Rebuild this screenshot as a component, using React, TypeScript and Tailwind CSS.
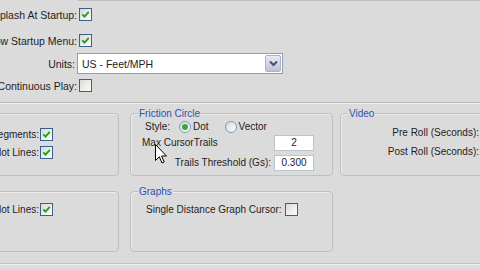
import React from "react";

const Check = ({ checked }: { checked?: boolean }) => (
  <span className="flex h-[13px] w-[13px] shrink-0 items-center justify-center border border-[#3a6189] bg-gradient-to-br from-[#d9d9d3] to-white">
    {checked && (
      <svg width="9" height="9" viewBox="0 0 9 9">
        <path d="M1.3 4.3 L3.5 6.6 L7.8 1.8" stroke="#21a121" strokeWidth="1.9" fill="none" />
      </svg>
    )}
  </span>
);

const Radio = ({ checked }: { checked?: boolean }) => (
  <span className="flex h-[12px] w-[12px] shrink-0 items-center justify-center rounded-full border border-[#7f9ab6] bg-gradient-to-br from-[#d3d9e1] to-white">
    {checked && <span className="h-[6px] w-[6px] rounded-full bg-[#3aa83a]" />}
  </span>
);

const Input = ({ value }: { value: string }) => (
  <div className="flex h-[16px] w-[40px] shrink-0 items-center justify-center border border-[#bcc5ce] bg-white">
    {value}
  </div>
);

const TopRow = ({ label, children }: { label: string; children: React.ReactNode }) => (
  <div className="flex items-center">
    <div className="flex w-[77px] shrink-0 justify-end overflow-hidden whitespace-nowrap text-[10.5px]">
      <span className="shrink-0">{label}</span>
    </div>
    <div className="ml-[2px]">{children}</div>
  </div>
);

const Group = ({
  title,
  className,
  children,
}: {
  title?: string;
  className: string;
  children?: React.ReactNode;
}) => (
  <div
    className={
      "relative shrink-0 rounded-[4px] border border-[#bfbfbf] shadow-[inset_1px_1px_0_#ececec] " +
      className
    }
  >
    {title && (
      <span className="absolute left-[7px] top-[-6px] bg-[#dcdbdb] px-[1px] leading-[12px] text-[#2a52b6]">
        {title}
      </span>
    )}
    {children}
  </div>
);

const SideRow = ({ label, checked }: { label: string; checked?: boolean }) => (
  <div className="flex h-[13px] items-center">
    <div className="flex w-[49px] shrink-0 justify-end whitespace-nowrap">
      <span className="shrink-0">{label}</span>
    </div>
    <div className="ml-[1px]">
      <Check checked={checked} />
    </div>
  </div>
);

export default function App() {
  return (
    <div className="relative h-[270px] w-[480px] overflow-hidden bg-[#dcdbdb] font-['Liberation_Sans',Arial,sans-serif] text-[10px] leading-[12px] text-[#1d1d1d]">
      <div className="ml-[78px] h-px bg-[#bdbdbd]" />
      <div className="flex flex-col pt-[7px]">
        <TopRow label="Show Splash At Startup:">
          <Check checked />
        </TopRow>
        <div className="mt-[13px]">
          <TopRow label="Show Startup Menu:">
            <Check checked />
          </TopRow>
        </div>
        <div className="mt-[6px] flex items-center">
          <div className="flex w-[77px] shrink-0 justify-end pr-[2px] text-[10.5px]">Units:</div>
          <div className="flex h-[21px] w-[206px] items-stretch border border-[#8aa0b8] bg-white">
            <span className="flex flex-1 items-center pl-[4px] text-[10.5px]">US - Feet/MPH</span>
            <span className="m-[1px] flex w-[16px] items-center justify-center rounded-[2px] border border-[#a9b4c6] bg-gradient-to-b from-[#e8ebf0] to-[#bcc4d2]">
              <svg width="9" height="7" viewBox="0 0 9 7">
                <path d="M1 1.5 L4.5 5 L8 1.5" stroke="#3f5276" strokeWidth="2" fill="none" />
              </svg>
            </span>
          </div>
        </div>
        <div className="mt-[5px]">
          <TopRow label="Continuous Play:">
            <Check />
          </TopRow>
        </div>
      </div>

      <div className="mt-[10px] h-px bg-[#b9b9b9]" />
      <div className="h-px bg-[#f2f2f2]" />

      <div className="mt-[9px] flex h-[63px]">
        <Group className="-ml-[11px] w-[130px]">
          <div className="flex flex-col pt-[14px]">
            <SideRow label="Segments:" checked />
            <div className="mt-[5px]">
              <SideRow label="Plot Lines:" checked />
            </div>
          </div>
        </Group>
        <Group title="Friction Circle" className="ml-[11px] w-[203px]">
          <div className="flex flex-col pr-[18px] pt-[6px]">
            <div className="flex h-[13px] items-center pl-[14px]">
              <span>Style:</span>
              <span className="ml-[9px]">
                <Radio checked />
              </span>
              <span className="ml-[2px]">Dot</span>
              <span className="ml-[16px]">
                <Radio />
              </span>
              <span className="ml-[2px]">Vector</span>
            </div>
            <div className="mt-[2px] flex h-[16px] items-center pl-[11px]">
              <span className="whitespace-nowrap">Max CursorTrails</span>
              <span className="ml-auto">
                <Input value="2" />
              </span>
            </div>
            <div className="mt-[4px] flex h-[16px] items-center justify-end gap-[3px]">
              <span className="whitespace-nowrap">Trails Threshold (Gs):</span>
              <Input value="0.300" />
            </div>
          </div>
        </Group>
        <Group title="Video" className="ml-[7px] w-[200px]">
          <div className="flex flex-col pt-[11px]">
            <div className="flex h-[16px] items-center">
              <div className="flex w-[138px] shrink-0 justify-end whitespace-nowrap">Pre Roll (Seconds):</div>
              <span className="ml-[4px]">
                <Input value="" />
              </span>
            </div>
            <div className="mt-[3px] flex h-[16px] items-center">
              <div className="flex w-[138px] shrink-0 justify-end whitespace-nowrap">Post Roll (Seconds):</div>
              <span className="ml-[4px]">
                <Input value="" />
              </span>
            </div>
          </div>
        </Group>
      </div>

      <div className="mt-[15px] flex h-[61px]">
        <Group className="-ml-[11px] w-[130px]">
          <div className="flex flex-col pt-[11px]">
            <SideRow label="Plot Lines:" checked />
          </div>
        </Group>
        <Group title="Graphs" className="ml-[11px] w-[203px]">
          <div className="mt-[11px] flex h-[13px] items-center pl-[15px]">
            <span className="whitespace-nowrap">Single Distance Graph Cursor:</span>
            <span className="ml-[3px]">
              <Check />
            </span>
          </div>
        </Group>
      </div>

      <div className="mt-[11px] h-px bg-[#c2c2c2]" />
      <div className="h-px bg-[#efefef]" />

      <svg
        className="absolute left-[155px] top-[144px]"
        width="13"
        height="21"
        viewBox="0 0 13 21"
      >
        <path
          d="M0.5 0.5 L0.5 16.5 L4.3 12.8 L7 19 L9.2 18 L6.6 12 L11.5 12 Z"
          fill="white"
          stroke="black"
          strokeWidth="1"
          strokeLinejoin="miter"
        />
      </svg>
    </div>
  );
}
